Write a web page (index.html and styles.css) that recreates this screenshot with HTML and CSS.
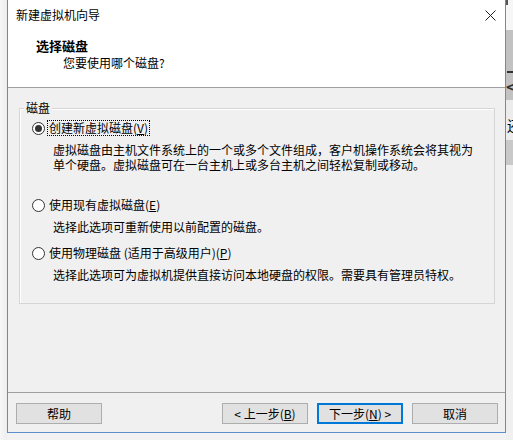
FILE: index.html
```html
<!DOCTYPE html>
<html lang="zh-CN">
<head>
<meta charset="utf-8">
<title>新建虚拟机向导</title>
<link rel="stylesheet" href="styles.css">
</head>
<body>
<div class="desk">
  <div class="left-strip"></div>
  <div class="window">
    <div class="titlebar">
      <span class="title">新建虚拟机向导</span>
      <svg class="close" width="11" height="11" viewBox="0 0 11 11"><path d="M0.5 0.5 L10.5 10.5 M10.5 0.5 L0.5 10.5" stroke="#222" stroke-width="1" fill="none"/></svg>
    </div>
    <div class="header">
      <div class="h-title">选择磁盘</div>
      <div class="h-sub">您要使用哪个磁盘?</div>
    </div>
    <div class="content">
      <div class="group">
        <span class="legend">磁盘</span>
        <div class="opt opt-first">
          <span class="radio checked"></span>
          <span class="label focus">创建新虚拟磁盘(<u>V</u>)</span>
        </div>
        <div class="desc desc-first"><div>虚拟磁盘由主机文件系统上的一个或多个文件组成，客户机操作系统会将其视为</div><div>单个硬盘。虚拟磁盘可在一台主机上或多台主机之间轻松复制或移动。</div></div>
        <div class="opt opt-second">
          <span class="radio"></span>
          <span class="label">使用现有虚拟磁盘(<u>E</u>)</span>
        </div>
        <div class="desc">选择此选项可重新使用以前配置的磁盘。</div>
        <div class="opt opt-third">
          <span class="radio"></span>
          <span class="label">使用物理磁盘 (适用于高级用户)(<u>P</u>)</span>
        </div>
        <div class="desc">选择此选项可为虚拟机提供直接访问本地硬盘的权限。需要具有管理员特权。</div>
      </div>
    </div>
    <div class="footer">
      <button class="btn">帮助</button>
      <div class="btn-group">
        <button class="btn">&lt; 上一步(<u>B</u>)</button>
        <button class="btn default">下一步(<u>N</u>) &gt;</button>
        <button class="btn">取消</button>
      </div>
    </div>
  </div>
  <div class="right-strip">
    <div class="rs-top"></div>
    <div class="rs-gray"><span class="rs-dash"></span><span class="rs-arrow">&lt;</span></div>
    <div class="rs-light"><span class="rs-char">还</span></div>
    <div class="rs-gray2"></div>
    <div class="rs-rest"></div>
  </div>
</div>
</body>
</html>
```

FILE: styles.css
```css
html, body {
  margin: 0;
  padding: 0;
}
body {
  width: 513px;
  height: 440px;
  overflow: hidden;
  background: #f2f2f2;
  font-family: "Noto Sans CJK SC", "Noto Sans", sans-serif;
  font-size: 12px;
  color: #000;
}
.desk {
  display: flex;
  width: 513px;
  height: 440px;
}
.left-strip {
  width: 7px;
  flex: none;
  background: linear-gradient(to right, #f7f7f7, #eeeeee);
}
.window {
  width: 499px;
  height: 433px;
  flex: none;
  box-sizing: border-box;
  border: 1px solid #5a8fcc;
  border-top: none;
  background: #f0f0f0;
  display: flex;
  flex-direction: column;
}
.titlebar {
  height: 30px;
  flex: none;
  background: #fff;
  display: flex;
  align-items: center;
  justify-content: space-between;
  padding: 0 9px 0 8px;
}
.title {
  line-height: 16px;
}
.close {
  display: block;
  margin-top: 1px;
}
.header {
  flex: none;
  box-sizing: border-box;
  background: #fff;
  border-bottom: 1px solid #a0a0a0;
  padding: 8px 0 0 28px;
  height: 58px;
}
.h-title {
  font-weight: bold;
  font-size: 13px;
  line-height: 16px;
}
.h-sub {
  margin-top: 1px;
  padding-left: 27px;
  line-height: 16px;
}
.content {
  height: 304px;
  flex: none;
  box-sizing: border-box;
  padding: 20px 10px 0 11px;
}
.group {
  position: relative;
  height: 196px;
  box-sizing: border-box;
  border: 1px solid #d5d5d5;
  box-shadow: inset 1px 1px 0 #fff;
  padding: 11px 0 0 12px;
}
.legend {
  position: absolute;
  top: -9px;
  left: 4px;
  padding: 0 2px;
  background: #f0f0f0;
  line-height: 16px;
}
.opt {
  display: flex;
  align-items: center;
  height: 16px;
}
.opt-second {
  margin-top: 25px;
}
.opt-third {
  margin-top: 11px;
}
.radio {
  width: 13px;
  height: 13px;
  box-sizing: border-box;
  border: 1px solid #333;
  border-radius: 50%;
  background: #fff;
  flex: none;
  display: flex;
  align-items: center;
  justify-content: center;
}
.radio.checked::after {
  content: "";
  width: 7px;
  height: 7px;
  border-radius: 50%;
  background: #333;
}
.label {
  margin-left: 2px;
  line-height: 14px;
  padding: 0 1px;
  border: 1px solid transparent;
}
.label.focus {
  border: 1px dotted #000;
}
.desc {
  margin-top: 6px;
  margin-left: 21px;
  line-height: 15px;
  white-space: nowrap;
}
.desc-first {
  margin-top: 6px;
}
.footer {
  flex: none;
  border-top: 1px solid #a0a0a0;
  padding: 10px 7px 8px 8px;
  display: flex;
  justify-content: space-between;
}
.btn-group {
  display: flex;
  gap: 9px;
}
.btn {
  width: 86px;
  height: 21px;
  box-sizing: border-box;
  border: 1px solid #adadad;
  background: #e1e1e1;
  font-family: "Noto Sans CJK SC", "Noto Sans", sans-serif;
  font-size: 12px;
  line-height: 17px;
  color: #000;
  padding: 0;
  margin: 0;
}
.btn.default {
  border: 1px solid #0078d7;
  box-shadow: inset 0 0 0 1px #0078d7;
}
.right-strip {
  width: 7px;
  flex: none;
  display: flex;
  flex-direction: column;
  overflow: hidden;
}
.rs-top {
  height: 30px;
  background: #f6f6f6;
  border-left: 2px solid #555;
  box-sizing: border-box;
  border-image: linear-gradient(#555 0 6px, transparent 6px) 1;
}
.rs-gray {
  height: 70px;
  background: #c2c2c2;
  position: relative;
}
.rs-dash {
  position: absolute;
  top: 41px;
  left: 1px;
  width: 6px;
  height: 2px;
  background: #333;
}
.rs-arrow {
  position: absolute;
  top: 49px;
  left: 0px;
  font-size: 15px;
  font-weight: bold;
  line-height: 16px;
  color: #333;
}
.rs-light {
  height: 40px;
  background: #ececec;
  position: relative;
}
.rs-char {
  position: absolute;
  top: 17px;
  left: 1px;
  font-size: 14px;
  line-height: 16px;
  white-space: nowrap;
}
.rs-gray2 {
  height: 25px;
  background: #c9c9c9;
}
.rs-rest {
  flex: 1;
  background: #f0f0f0;
}
```
